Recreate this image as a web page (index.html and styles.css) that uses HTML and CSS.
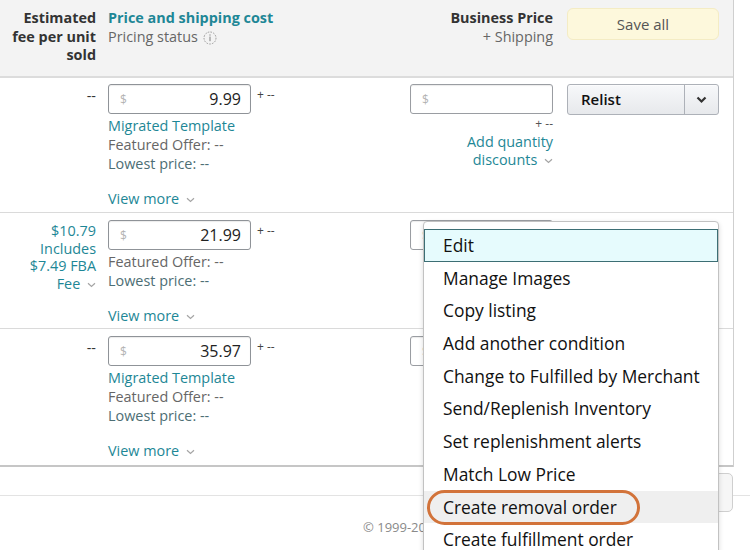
FILE: index.html
```html
<!DOCTYPE html>
<html>
<head>
<meta charset="utf-8">
<link rel="stylesheet" href="styles.css">
</head>
<body>
<div class="page">
  <div class="table">
    <div class="row thead">
      <div class="c1 bold">Estimated<br>fee per unit<br>sold</div>
      <div class="c2">
        <div class="link bold">Price and shipping cost</div>
        <div class="muted">Pricing status <svg class="info" width="14" height="14" viewBox="0 0 14 14"><circle cx="7" cy="7" r="6" fill="none" stroke="#9a9a9a" stroke-width="1" stroke-dasharray="1.6 1.2"/><rect x="6.45" y="3.4" width="1.1" height="1.2" fill="#888"/><rect x="6.45" y="5.6" width="1.1" height="4.6" fill="#888"/></svg></div>
      </div>
      <div class="c3">
        <div class="bold">Business Price</div>
        <div class="muted">+ Shipping</div>
      </div>
      <div class="c4"><div class="save">Save all</div></div>
    </div>

    <div class="row trow r1">
      <div class="c1">--</div>
      <div class="c2">
        <div class="price-line"><div class="input"><span class="cur">$</span><span class="val">9.99</span></div><span class="ship">+ --</span></div>
        <div class="info-lines">
          <div class="link">Migrated Template</div>
          <div class="muted">Featured Offer: --</div>
          <div class="lowest">Lowest price: --</div>
        </div>
        <div class="viewmore link">View more <svg class="chev" width="9" height="6" viewBox="0 0 9 6"><path d="M1 1.2 L4.5 4.5 L8 1.2" fill="none" stroke="#a5a5a5" stroke-width="1.2"/></svg></div>
      </div>
      <div class="c3">
        <div class="input biz"><span class="cur">$</span><span class="val"></span></div>
        <div class="biz-lines">
          <div class="ship2">+ --</div>
          <div class="link">Add quantity<br>discounts <svg class="chev" width="9" height="6" viewBox="0 0 9 6"><path d="M1 1.2 L4.5 4.5 L8 1.2" fill="none" stroke="#a5a5a5" stroke-width="1.2"/></svg></div>
        </div>
      </div>
      <div class="c4">
        <div class="action"><span class="action-label">Relist</span><span class="action-arrow"><svg width="11" height="8" viewBox="0 0 11 8"><path d="M1.5 1.5 L5.5 5.5 L9.5 1.5" fill="none" stroke="#333" stroke-width="2.2"/></svg></span></div>
      </div>
    </div>

    <div class="row trow r2">
      <div class="c1 fee link">$10.79<br>Includes<br>$7.49 FBA<br>Fee <svg class="chev" width="9" height="6" viewBox="0 0 9 6"><path d="M1 1.2 L4.5 4.5 L8 1.2" fill="none" stroke="#a5a5a5" stroke-width="1.2"/></svg></div>
      <div class="c2">
        <div class="price-line"><div class="input"><span class="cur">$</span><span class="val">21.99</span></div><span class="ship">+ --</span></div>
        <div class="info-lines">
          <div class="muted">Featured Offer: --</div>
          <div class="lowest">Lowest price: --</div>
        </div>
        <div class="viewmore link">View more <svg class="chev" width="9" height="6" viewBox="0 0 9 6"><path d="M1 1.2 L4.5 4.5 L8 1.2" fill="none" stroke="#a5a5a5" stroke-width="1.2"/></svg></div>
      </div>
      <div class="c3">
        <div class="input biz"><span class="cur">$</span><span class="val"></span></div>
      </div>
      <div class="c4"></div>
    </div>

    <div class="row trow r3">
      <div class="c1">--</div>
      <div class="c2">
        <div class="price-line"><div class="input"><span class="cur">$</span><span class="val">35.97</span></div><span class="ship">+ --</span></div>
        <div class="info-lines">
          <div class="link">Migrated Template</div>
          <div class="muted">Featured Offer: --</div>
          <div class="lowest">Lowest price: --</div>
        </div>
        <div class="viewmore link">View more <svg class="chev" width="9" height="6" viewBox="0 0 9 6"><path d="M1 1.2 L4.5 4.5 L8 1.2" fill="none" stroke="#a5a5a5" stroke-width="1.2"/></svg></div>
      </div>
      <div class="c3">
        <div class="input biz"><span class="cur">$</span><span class="val"></span></div>
      </div>
      <div class="c4"></div>
    </div>
  </div>

  <div class="bottom-bar"></div>
  <div class="footer"><span class="footer-text">© 1999-2020, Amazon.com, Inc. or its affiliates</span></div>

  <div class="hidden-btn"></div>

  <div class="menu">
    <div class="item active">Edit</div>
    <div class="item">Manage Images</div>
    <div class="item">Copy listing</div>
    <div class="item">Add another condition</div>
    <div class="item">Change to Fulfilled by Merchant</div>
    <div class="item">Send/Replenish Inventory</div>
    <div class="item">Set replenishment alerts</div>
    <div class="item">Match Low Price</div>
    <div class="item hover">Create removal order<span class="ring"></span></div>
    <div class="item">Create fulfillment order</div>
  </div>
</div>
</body>
</html>
```

FILE: styles.css
```css
html, body {
  margin: 0;
  padding: 0;
  background: #fff;
}

.page {
  position: relative;
  width: 750px;
  height: 550px;
  overflow: hidden;
  background: #fff;
  font-family: "Open Sans", "Noto Sans", sans-serif;
  font-size: 14.4px;
  color: #333;
}

.table {
  width: 733px;
  border-right: 1px solid #cfcfcf;
}

.row {
  display: grid;
  grid-template-columns: 108px 290px 169px 166px;
  box-sizing: border-box;
}

.c1 {
  text-align: right;
  padding-right: 12px;
}

.c3 {
  text-align: right;
  padding-right: 14px;
}

.c4 {
  padding-right: 14px;
}

.bold {
  font-weight: 700;
}

.link {
  color: #1e8796;
}

.muted {
  color: #666;
}

.lowest {
  color: #4d6e74;
}

.thead {
  height: 78px;
  background: #f3f3f3;
  border-bottom: 2px solid #dcdcdc;
  padding-top: 9px;
  line-height: 18.5px;
}

.thead .c1 {
  color: #333;
}

.thead .c3 .bold {
  color: #333;
}

.info {
  vertical-align: -3px;
  margin-left: 1px;
}

.save {
  margin-top: -1px;
  height: 32px;
  box-sizing: border-box;
  background: #fdf8dc;
  border: 1px solid #f4ecc4;
  border-radius: 6px;
  text-align: center;
  line-height: 30px;
  font-size: 15px;
  color: #555;
}

.trow {
  border-bottom: 1px solid #dadada;
  line-height: 19px;
}

.r1 {
  height: 135px;
  padding-top: 6px;
}

.r2 {
  height: 116px;
  padding-top: 7px;
}

.r3 {
  height: 138px;
  padding-top: 7px;
  border-bottom: 2px solid #c6c6c6;
}

.trow .c1 {
  padding-top: 2px;
}

.fee {
  line-height: 17.7px;
}

.price-line {
  display: flex;
  align-items: flex-start;
  gap: 6px;
}

.input {
  width: 143px;
  height: 30px;
  box-sizing: border-box;
  border: 1px solid #8f9398;
  border-radius: 3px;
  box-shadow: inset 0 1px 1px rgba(0, 0, 0, 0.08);
  display: flex;
  justify-content: space-between;
  align-items: center;
  padding: 0 9px 0 11px;
  background: #fff;
}

.cur {
  color: #b3b3b3;
  font-size: 12px;
}

.val {
  color: #222;
  font-size: 16px;
}

.biz {
  margin-left: auto;
  border-color: #9a9da2;
}

.ship {
  font-size: 12px;
  line-height: 16px;
  margin-top: 3px;
  color: #444;
}

.info-lines {
  margin-top: 1.5px;
}

.viewmore {
  margin-top: 16px;
}

.chev {
  vertical-align: 1px;
  margin-left: 3px;
}

.biz-lines {
  margin-top: 1px;
  line-height: 18px;
}

.ship2 {
  font-size: 12px;
  color: #555;
}

.action {
  display: flex;
  height: 31px;
  box-sizing: border-box;
  border: 1px solid #adb1b8;
  border-radius: 3px;
  background: linear-gradient(#f7f8fa, #e7e9ec);
  box-shadow: 0 1px 0 rgba(255, 255, 255, 0.6) inset;
}

.action-label {
  flex: 1;
  padding-left: 13px;
  line-height: 29px;
  font-size: 15px;
  color: #111;
  font-weight: 600;
}

.action-arrow {
  width: 33px;
  border-left: 1px solid #adb1b8;
  display: flex;
  align-items: center;
  justify-content: center;
}

.bottom-bar {
  height: 28px;
  border-bottom: 1px solid #e3e3e3;
}

.footer {
  padding-top: 22px;
  padding-left: 363px;
  font-size: 13px;
  color: #8a8a8a;
  line-height: 18px;
}

.footer-text {
  display: block;
  width: 60px;
  overflow: hidden;
  white-space: nowrap;
}

.hidden-btn {
  position: absolute;
  left: 700px;
  top: 473px;
  width: 33px;
  height: 39px;
  box-sizing: border-box;
  border: 1px solid #cfcfcf;
  border-radius: 5px;
  background: #f6f6f6;
}

.menu {
  position: absolute;
  left: 423px;
  top: 221px;
  width: 296px;
  height: 360px;
  box-sizing: border-box;
  background: #fff;
  border: 1px solid #c2c2c2;
  border-radius: 4px;
  box-shadow: 0 2px 5px rgba(0, 0, 0, 0.15);
  padding-top: 7px;
  font-size: 17.4px;
  color: #111;
}

.item {
  position: relative;
  height: 32.7px;
  line-height: 32.7px;
  padding-left: 19px;
  box-sizing: border-box;
  white-space: nowrap;
}

.item.active {
  background: #e6fbfd;
  border: 1px solid #3c6e74;
  line-height: 30.7px;
  padding-left: 18px;
}

.item.hover {
  background: #efefef;
}

.ring {
  position: absolute;
  left: 3px;
  top: -1px;
  width: 213px;
  height: 35px;
  box-sizing: border-box;
  border: 3px solid #d2733a;
  border-radius: 18px;
}
```
